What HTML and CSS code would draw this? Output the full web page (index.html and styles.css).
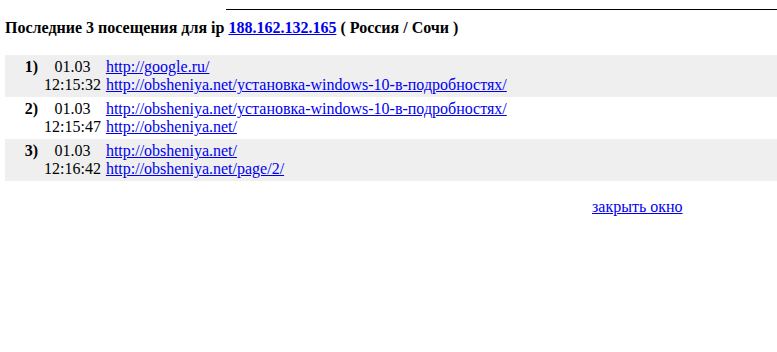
FILE: index.html
```html
<!DOCTYPE html>
<html lang="ru">
<head>
<meta charset="UTF-8" />
<title>Последние посещения</title>
<link rel="stylesheet" href="styles.css">
</head>
<body>
  <div class="ligne"></div>
  <h3 class="titre">Последние 3 посещения для ip <a href="#">188.162.132.165</a> ( Россия / Сочи )</h3>

  <table class="visites">
    <tr class="gris">
      <td class="num">1)</td>
      <td class="quand">01.03<br>12:15:32</td>
      <td class="liens"><a href="#">http://google.ru/</a><br><a href="#">http://obsheniya.net/установка-windows-10-в-подробностях/</a></td>
    </tr>
    <tr>
      <td class="num">2)</td>
      <td class="quand">01.03<br>12:15:47</td>
      <td class="liens"><a href="#">http://obsheniya.net/установка-windows-10-в-подробностях/</a><br><a href="#">http://obsheniya.net/</a></td>
    </tr>
    <tr class="gris">
      <td class="num">3)</td>
      <td class="quand">01.03<br>12:16:42</td>
      <td class="liens"><a href="#">http://obsheniya.net/</a><br><a href="#">http://obsheniya.net/page/2/</a></td>
    </tr>
  </table>

  <div class="fermer"><a href="#">закрыть окно</a></div>
</body>
</html>
```

FILE: styles.css
```css
body {
  margin: 0;
  padding: 0 0 0 5px;
  font-family: "Liberation Serif", "Times New Roman", serif;
  font-size: 16px;
  color: #000;
  background: #fff;
}
a {
  color: #0000ee;
}
.ligne {
  margin: 9px 0 0 221px;
  border-top: 1px solid #000;
}
.titre {
  margin: 9px 0 0;
  font-size: 16px;
  font-weight: bold;
  line-height: 18px;
}
.visites {
  width: 100%;
  margin-top: 18px;
  border-collapse: collapse;
}
.visites td {
  padding: 3px 3px;
  line-height: 18px;
  vertical-align: top;
}
.gris {
  background: #efefef;
}
.num {
  width: 30px;
  text-align: right;
  font-weight: bold;
}
.quand {
  width: 55px;
  text-align: center;
}
.visites td.liens {
  padding-left: 2px;
}
.fermer {
  margin: 17px 0 0 587px;
}
```
